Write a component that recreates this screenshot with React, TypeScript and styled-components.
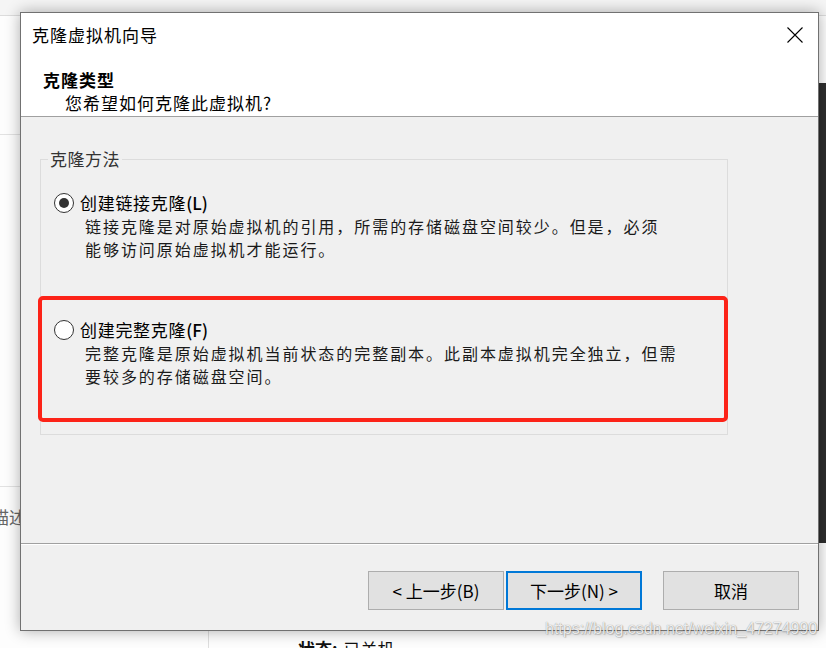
import React from "react";
import styled, { createGlobalStyle } from "styled-components";

const GlobalStyle = createGlobalStyle`
  html, body { margin: 0; padding: 0; background: #ffffff; overflow: hidden; }
  * { box-sizing: border-box; }
`;

const CJK = `"Noto Sans CJK SC", "Noto Sans", sans-serif`;

const Page = styled.div`
  position: relative;
  width: 826px;
  height: 648px;
  overflow: hidden;
  font-family: ${CJK};
  background: #fdfdfd;
`;

/* ---------- background application ---------- */
const Backdrop = styled.div`
  display: flex;
  flex-direction: column;
  width: 100%;
  height: 100%;
`;

const BgTopBar = styled.div`
  height: 16px;
  flex: none;
  background: #f5f5f5;
  border-bottom: 1px solid #dcdcdc;
`;

const BgBody = styled.div`
  flex: 1;
  display: flex;
  min-height: 0;
`;

const BgSide = styled.div`
  width: 209px;
  flex: none;
  display: flex;
  flex-direction: column;
  border-right: 1px solid #dedede;
  overflow: hidden;
`;

const BgSideBlock = styled.div<{ $h: number }>`
  height: ${(p) => p.$h}px;
  flex: none;
  border-bottom: 1px solid #e2e2e2;
`;

const BgSideLabel = styled.div`
  margin: 19px 0 0 -8px;
  font-size: 17px;
  line-height: 22px;
  color: #666;
  white-space: nowrap;
`;

const BgMain = styled.div`
  flex: 1;
  display: flex;
  flex-direction: column;
  justify-content: flex-end;
  padding-left: 89px;
`;

const BgStatus = styled.div`
  margin-bottom: -12px;
  font-size: 17px;
  line-height: 22px;
  color: #111;
  white-space: nowrap;
  b { font-weight: 700; margin-right: 6px; }
`;

const BgStrip = styled.div`
  width: 8px;
  flex: none;
  margin-top: 67px;
  height: 460px;
  background: #2e2e2e;
`;

/* ---------- dialog window ---------- */
const Dialog = styled.div`
  position: absolute;
  left: 20px;
  top: 12px;
  width: 799px;
  height: 619px;
  border: 1px solid #717171;
  background: #f0f0f0;
  box-shadow: 0 0 14px rgba(0, 0, 0, 0.32);
  display: flex;
  flex-direction: column;
`;

const TitleBar = styled.div`
  height: 44px;
  flex: none;
  display: flex;
  align-items: center;
  justify-content: space-between;
  background: #ffffff;
  padding-left: 11px;
`;

const TitleText = styled.div`
  font-size: 17px;
  letter-spacing: 1px;
  color: #000;
  line-height: 22px;
`;

const CloseButton = styled.div`
  width: 46px;
  height: 44px;
  display: flex;
  align-items: center;
  justify-content: center;
`;

const Header = styled.div`
  height: 60px;
  flex: none;
  background: #ffffff;
  border-bottom: 1px solid #a0a0a0;
  padding: 11px 0 0 22px;
`;

const HeaderTitle = styled.div`
  font-size: 17px;
  font-weight: 700;
  letter-spacing: 1px;
  line-height: 23px;
  color: #000;
`;

const HeaderSub = styled.div`
  font-size: 17px;
  letter-spacing: 1px;
  line-height: 23px;
  color: #000;
  padding-left: 22px;
`;

const Content = styled.div`
  flex: 1;
  padding: 32px 0 0 19px;
`;

const GroupBox = styled.fieldset`
  width: 688px;
  margin: 0;
  padding: 22px 0 46px 13px;
  border: 1px solid #dcdcdc;
  display: flex;
  flex-direction: column;
  gap: 57px;
`;

const Legend = styled.legend`
  margin-left: -6px;
  padding: 0 2px;
  font-size: 17px;
  line-height: 20px;
  letter-spacing: 0.5px;
  color: #333;
`;

const Option = styled.div`
  display: flex;
  flex-direction: column;
`;

const OptionRow = styled.div`
  display: flex;
  align-items: center;
  height: 24px;
  gap: 6px;
`;

const Radio = styled.span<{ $checked?: boolean }>`
  width: 20px;
  height: 20px;
  flex: none;
  border-radius: 50%;
  border: 1.6px solid #333;
  background: #ffffff;
  display: flex;
  align-items: center;
  justify-content: center;
  &::after {
    content: "";
    display: ${(p) => (p.$checked ? "block" : "none")};
    width: 10px;
    height: 10px;
    border-radius: 50%;
    background: #333;
  }
`;

const OptionLabel = styled.span`
  font-size: 17px;
  letter-spacing: 0.7px;
  line-height: 24px;
  color: #000;
`;

const Mnemonic = styled.span`
  letter-spacing: 0;
  font-weight: 500;
`;

const OptionDesc = styled.div`
  padding-left: 31px;
  font-size: 16px;
  letter-spacing: 1.95px;
  line-height: 23px;
  color: #1a1a1a;
  white-space: nowrap;
`;

const Footer = styled.div`
  height: 87px;
  flex: none;
  border-top: 1px solid #a0a0a0;
  box-shadow: inset 0 1px 0 #ffffff;
  padding: 27px 19px 0 0;
  display: flex;
  justify-content: flex-end;
  align-items: flex-start;
`;

const ButtonGroup = styled.div`
  display: flex;
  gap: 2px;
`;

const Button = styled.button<{ $primary?: boolean }>`
  width: 136px;
  height: 39px;
  margin: 0;
  padding: 0;
  background: #e1e1e1;
  border: ${(p) => (p.$primary ? "2px solid #0078d7" : "1px solid #adadad")};
  font-family: ${CJK};
  font-size: 17px;
  color: #000;
  display: flex;
  align-items: center;
  justify-content: center;
`;

const CancelButton = styled(Button)`
  margin-left: 21px;
`;

/* ---------- overlays ---------- */
const Highlight = styled.div`
  position: absolute;
  left: 38px;
  top: 296px;
  width: 690px;
  height: 126px;
  border: 4px solid #fc2318;
  border-radius: 5px;
  pointer-events: none;
`;

const Watermark = styled.div`
  position: absolute;
  left: 545px;
  top: 618px;
  font-family: "Liberation Sans", Arial, sans-serif;
  font-size: 16px;
  line-height: 22px;
  color: rgba(255, 255, 255, 0.85);
  text-shadow: 0 0 1px rgba(0, 0, 0, 0.45), 1px 1px 1px rgba(0, 0, 0, 0.15);
  white-space: nowrap;
  pointer-events: none;
`;

const CloseIcon = () => (
  <svg width="16" height="16" viewBox="0 0 16 16">
    <path d="M0.5 0.5 L15.5 15.5 M15.5 0.5 L0.5 15.5" stroke="#000" strokeWidth="1.1" fill="none" />
  </svg>
);

export default function App() {
  return (
    <Page>
      <GlobalStyle />
      <Backdrop>
        <BgTopBar />
        <BgBody>
          <BgSide>
            <BgSideBlock $h={119} />
            <BgSideBlock $h={352} />
            <BgSideLabel>描述</BgSideLabel>
          </BgSide>
          <BgMain>
            <BgStatus>
              <b>状态:</b>已关机
            </BgStatus>
          </BgMain>
          <BgStrip />
        </BgBody>
      </Backdrop>

      <Dialog>
        <TitleBar>
          <TitleText>克隆虚拟机向导</TitleText>
          <CloseButton>
            <CloseIcon />
          </CloseButton>
        </TitleBar>
        <Header>
          <HeaderTitle>克隆类型</HeaderTitle>
          <HeaderSub>您希望如何克隆此虚拟机?</HeaderSub>
        </Header>
        <Content>
          <GroupBox>
            <Legend>克隆方法</Legend>
            <Option>
              <OptionRow>
                <Radio $checked />
                <OptionLabel>
                  创建链接克隆<Mnemonic>(L)</Mnemonic>
                </OptionLabel>
              </OptionRow>
              <OptionDesc>
                链接克隆是对原始虚拟机的引用，所需的存储磁盘空间较少。但是，必须
                <br />
                能够访问原始虚拟机才能运行。
              </OptionDesc>
            </Option>
            <Option>
              <OptionRow>
                <Radio />
                <OptionLabel>
                  创建完整克隆<Mnemonic>(F)</Mnemonic>
                </OptionLabel>
              </OptionRow>
              <OptionDesc>
                完整克隆是原始虚拟机当前状态的完整副本。此副本虚拟机完全独立，但需
                <br />
                要较多的存储磁盘空间。
              </OptionDesc>
            </Option>
          </GroupBox>
        </Content>
        <Footer>
          <ButtonGroup>
            <Button>&lt; 上一步(B)</Button>
            <Button $primary>下一步(N) &gt;</Button>
          </ButtonGroup>
          <CancelButton>取消</CancelButton>
        </Footer>
      </Dialog>

      <Highlight />
      <Watermark>https://blog.csdn.net/weixin_47274990</Watermark>
    </Page>
  );
}
